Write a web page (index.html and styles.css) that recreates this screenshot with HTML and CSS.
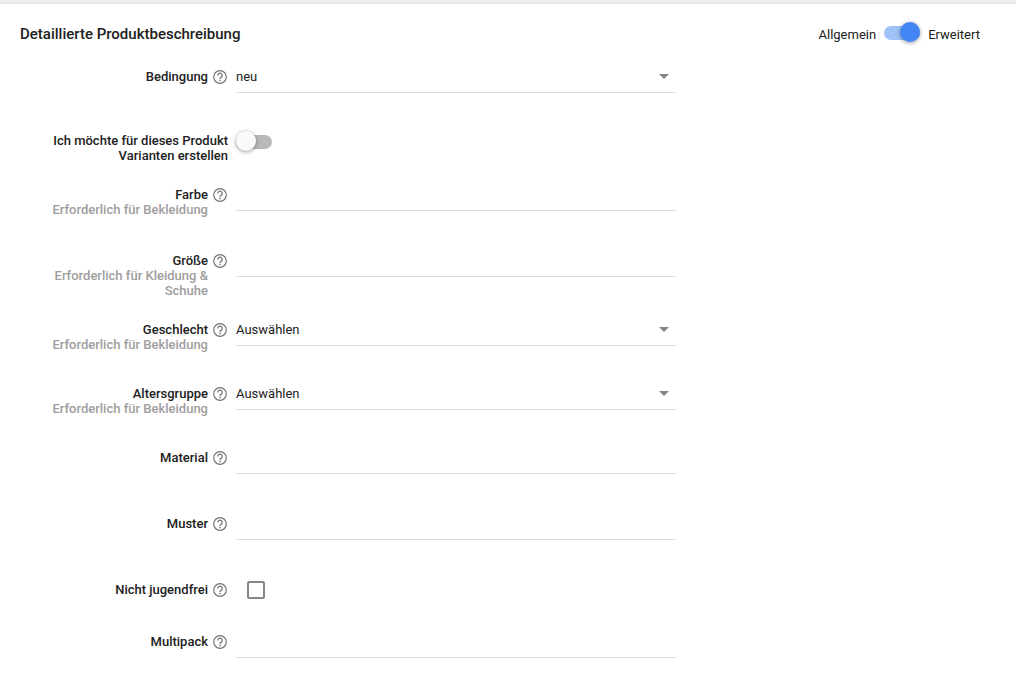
FILE: index.html
```
<!DOCTYPE html>
<html lang="de">
<head>
    <meta charset="UTF-8">
    <meta name="viewport" content="width=device-width, initial-scale=1.0">
    <title>Detaillierte Produktbeschreibung</title>
    <link rel="stylesheet" href="styles.css">
</head>
<body>
    <!-- Hilfe-Symbol, wird in allen Zeilen verwendet -->
    <svg class="sprite" aria-hidden="true">
        <symbol id="help" viewBox="0 0 16 16">
            <circle cx="8" cy="8" r="6.3" fill="none" stroke="currentColor" stroke-width="1.2"/>
            <path d="M5.8 6.5a2.2 2.2 0 1 1 3.6 1.6C8.5 8.8 8 9.1 8 10" fill="none" stroke="currentColor" stroke-width="1.3"/>
            <path d="M7.3 10.8h1.4v1.4H7.3z" fill="currentColor"/>
        </symbol>
    </svg>

    <form class="panel">
        <header class="panel-header">
            <h1>Detaillierte Produktbeschreibung</h1>
            <label class="mode">
                <span>Allgemein</span>
                <input class="switch" type="checkbox" role="switch" checked>
                <span>Erweitert</span>
            </label>
        </header>

        <div class="field field-select">
            <div class="caption">
                <label for="condition">Bedingung</label>
                <svg class="help"><use href="#help"/></svg>
            </div>
            <div class="select">
                <select id="condition">
                    <option>neu</option>
                    <option>gebraucht</option>
                </select>
            </div>
        </div>

        <div class="field">
            <div class="caption">
                <label for="variants">Ich möchte für dieses Produkt Varianten erstellen</label>
            </div>
            <input class="switch" type="checkbox" role="switch" id="variants">
        </div>

        <div class="field field-text">
            <div class="caption">
                <label for="color">Farbe <small>Erforderlich für Bekleidung</small></label>
                <svg class="help"><use href="#help"/></svg>
            </div>
            <input class="text" type="text" id="color">
        </div>

        <div class="field field-text">
            <div class="caption">
                <label for="size">Größe <small>Erforderlich für Kleidung &amp; Schuhe</small></label>
                <svg class="help"><use href="#help"/></svg>
            </div>
            <input class="text" type="text" id="size">
        </div>

        <div class="field field-select">
            <div class="caption">
                <label for="gender">Geschlecht <small>Erforderlich für Bekleidung</small></label>
                <svg class="help"><use href="#help"/></svg>
            </div>
            <div class="select">
                <select id="gender">
                    <option>Auswählen</option>
                </select>
            </div>
        </div>

        <div class="field field-select">
            <div class="caption">
                <label for="age">Altersgruppe <small>Erforderlich für Bekleidung</small></label>
                <svg class="help"><use href="#help"/></svg>
            </div>
            <div class="select">
                <select id="age">
                    <option>Auswählen</option>
                </select>
            </div>
        </div>

        <div class="field field-text">
            <div class="caption">
                <label for="material">Material</label>
                <svg class="help"><use href="#help"/></svg>
            </div>
            <input class="text" type="text" id="material">
        </div>

        <div class="field field-text">
            <div class="caption">
                <label for="pattern">Muster</label>
                <svg class="help"><use href="#help"/></svg>
            </div>
            <input class="text" type="text" id="pattern">
        </div>

        <div class="field field-check">
            <div class="caption">
                <label for="adult">Nicht jugendfrei</label>
                <svg class="help"><use href="#help"/></svg>
            </div>
            <input class="check" type="checkbox" id="adult">
        </div>

        <div class="field">
            <div class="caption">
                <label for="multipack">Multipack</label>
                <svg class="help"><use href="#help"/></svg>
            </div>
            <input class="text" type="text" id="multipack">
        </div>
    </form>
</body>
</html>
```

FILE: styles.css
```
:root {
    --text: #212121;
    --hint: #9e9e9e;
    --icon: #757575;
    --line: #dcdcdc;
    --blue: #4285f4;
}

* {
    box-sizing: border-box;
}

body {
    margin: 0;
    background: #fff;
    color: var(--text);
    font: 13px/15px Roboto, "Liberation Sans", sans-serif;
}

/* Schattenkante am oberen Rand */
body::before {
    content: "";
    display: block;
    height: 4px;
    background: linear-gradient(#f0f0f0, #e4e4e4);
}

.sprite {
    display: none;
}

.panel {
    padding: 0 36px 0 20px;
}

/* Kopfzeile */
.panel-header {
    display: flex;
    justify-content: space-between;
    padding: 18px 0 19px;
}

h1 {
    margin: 0;
    font-size: 15px;
    font-weight: 500;
    line-height: 24px;
}

.mode {
    display: flex;
    align-items: flex-start;
    gap: 8px;
    line-height: 26px;
}

/* Formularzeilen */
.field {
    display: grid;
    grid-template-columns: 208px minmax(0, 440px);
    column-gap: 8px;
    align-items: start;
    padding-bottom: 22px;
}

.field-select {
    min-height: 64px;
}

.field-text {
    min-height: 66px;
}

.field-check {
    min-height: 52px;
}

.field:last-child {
    padding-bottom: 0;
}

.caption {
    display: flex;
    justify-content: flex-end;
    gap: 4px;
    padding: 2px 0 0 24px;
    font-weight: 500;
    text-align: right;
}

.caption small {
    display: block;
    color: var(--hint);
    font-size: 13px;
}

.help {
    flex: none;
    width: 16px;
    height: 16px;
    color: var(--icon);
}

.text,
select {
    display: block;
    width: 100%;
    height: 26px;
    margin: 0;
    padding: 0 0 7px;
    border: 0;
    border-bottom: 1px solid var(--line);
    border-radius: 0;
    background: none;
    color: var(--text);
    font: inherit;
    outline: none;
    appearance: none;
}

.text:focus,
select:focus {
    border-color: var(--blue);
}

.select {
    position: relative;
}

.select::after {
    content: "";
    position: absolute;
    top: 7px;
    right: 7px;
    border: 5px solid transparent;
    border-top-color: #858585;
    border-bottom: 0;
    pointer-events: none;
}

/* Schalter */
.switch {
    display: flex;
    width: 36px;
    height: 20px;
    margin: 0;
    appearance: none;
}

.switch::before {
    content: "";
    width: 36px;
    height: 14px;
    margin-top: 4px;
    border-radius: 7px;
    background: #b9b9b9;
}

.switch::after {
    content: "";
    flex: none;
    width: 20px;
    height: 20px;
    margin-left: -36px;
    border-radius: 50%;
    background: #fafafa;
    box-shadow: 0 1px 4px rgba(0, 0, 0, 0.4);
}

.switch:checked::before {
    background: #a0c2f9;
}

.switch:checked::after {
    margin-left: -20px;
    background: var(--blue);
}

.check {
    width: 18px;
    height: 18px;
    margin: 1px 0 0 11px;
    border: 2px solid #858585;
    border-radius: 2px;
    appearance: none;
}

.check:checked {
    border-color: var(--blue);
    background: var(--blue);
}
```
